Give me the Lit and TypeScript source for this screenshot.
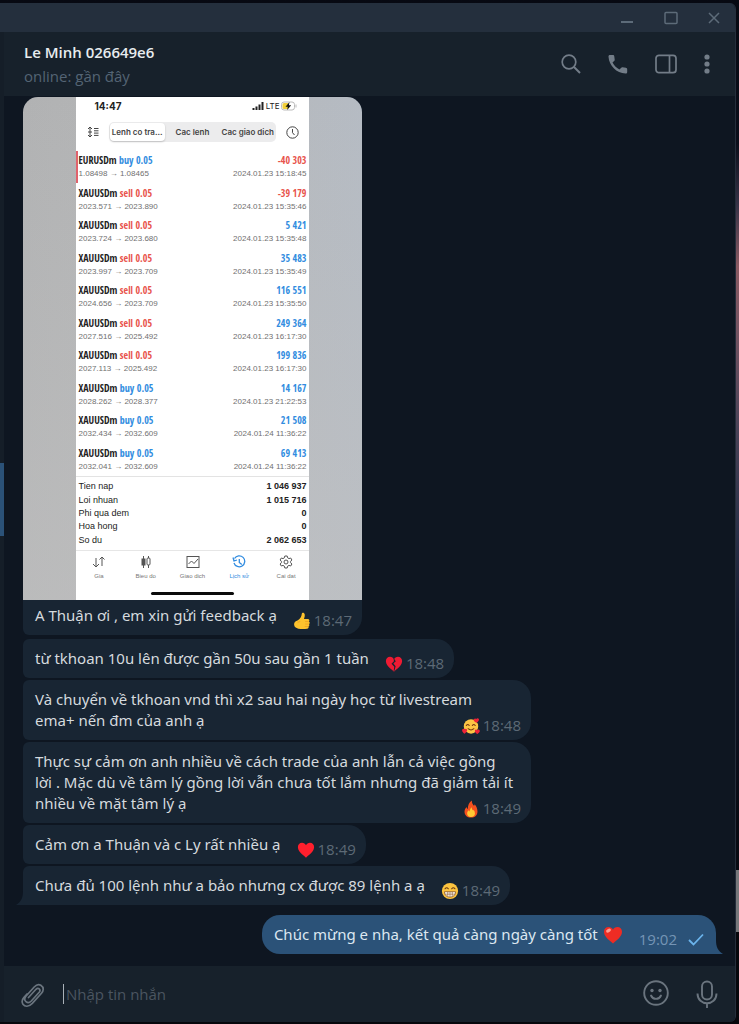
import { LitElement, html, svg, css, TemplateResult } from "lit";
import { customElement, property } from "lit/decorators.js";
import { classMap } from "lit/directives/class-map.js";

interface Trade {
  symbol: string;
  side: "buy" | "sell";
  from: string;
  to: string;
  profit: string;
  time: string;
}

interface Message {
  text: string;
  time: string;
  reaction: string;
  tail?: boolean;
}

const TRADES: Trade[] = [
  { symbol: "EURUSDm", side: "buy", from: "1.08498", to: "1.08465", profit: "-40 303", time: "2024.01.23 15:18:45" },
  { symbol: "XAUUSDm", side: "sell", from: "2023.571", to: "2023.890", profit: "-39 179", time: "2024.01.23 15:35:46" },
  { symbol: "XAUUSDm", side: "sell", from: "2023.724", to: "2023.680", profit: "5 421", time: "2024.01.23 15:35:48" },
  { symbol: "XAUUSDm", side: "sell", from: "2023.997", to: "2023.709", profit: "35 483", time: "2024.01.23 15:35:49" },
  { symbol: "XAUUSDm", side: "sell", from: "2024.656", to: "2023.709", profit: "116 551", time: "2024.01.23 15:35:50" },
  { symbol: "XAUUSDm", side: "sell", from: "2027.516", to: "2025.492", profit: "249 364", time: "2024.01.23 16:17:30" },
  { symbol: "XAUUSDm", side: "sell", from: "2027.113", to: "2025.492", profit: "199 836", time: "2024.01.23 16:17:30" },
  { symbol: "XAUUSDm", side: "buy", from: "2028.262", to: "2028.377", profit: "14 167", time: "2024.01.23 21:22:53" },
  { symbol: "XAUUSDm", side: "buy", from: "2032.434", to: "2032.609", profit: "21 508", time: "2024.01.24 11:36:22" },
  { symbol: "XAUUSDm", side: "buy", from: "2032.041", to: "2032.609", profit: "69 413", time: "2024.01.24 11:36:22" },
];

const TOTALS: [string, string][] = [
  ["Tien nap", "1 046 937"],
  ["Loi nhuan", "1 015 716"],
  ["Phi qua dem", "0"],
  ["Hoa hong", "0"],
  ["So du", "2 062 653"],
];

const MESSAGES: Message[] = [
  { text: "từ tkhoan 10u lên được gần 50u sau gần 1 tuần", time: "18:48", reaction: "broken" },
  { text: "Và chuyển về tkhoan vnd thì x2 sau hai ngày học từ livestream\nema+ nến đm của anh ạ", time: "18:48", reaction: "love" },
  { text: "Thực sự cảm ơn anh nhiều về cách trade của anh lẫn cả việc gồng\nlời . Mặc dù về tâm lý gồng lời vẫn chưa tốt lắm nhưng đã giảm tải ít\nnhiều về mặt tâm lý ạ", time: "18:49", reaction: "fire" },
  { text: "Cảm ơn a Thuận và c Ly rất nhiều ạ", time: "18:49", reaction: "heart" },
  { text: "Chưa đủ 100 lệnh như a bảo nhưng cx được 89 lệnh a ạ", time: "18:49", reaction: "grin", tail: true },
];

const HEART = "M10 18.5C4.5 14 1 11 1 6.8 1 4 3 2 5.6 2 7.500 2 9.200 3 10 4.700 10.800 3 12.500 2 14.400 2 17 2 19 4 19 6.800 19 11 15.500 14 10 18.500Z";

const EMOJI: Record<string, TemplateResult> = {
  thumb: svg`<path fill="#fdc22d" d="M5.500 9.200C8 7.500 9.600 5 9.700 2.200 9.900.3 12.600.2 13 2.600c.3 1.800-.2 3.600-.8 5.200h4.200c2 0 2.300 2 1.200 2.700 1.400.7 1.200 2.500.1 2.900.9.800.6 2.300-.5 2.700.5 1.200-.2 2.500-1.600 2.600-3.200.5-6.600.4-9.600-.2-2.800-.4-4.600-1.700-4.800-4.500-.1-2.400 1.700-4 4.300-4.800Z"/><path fill="none" stroke="#e8961c" stroke-width=".7" d="M13.500 10.600h4M13.500 13.400h4M13 16.100h3.900M8 10.500c-1 .5-2 .8-3 .8"/>`,
  broken: svg`<path fill="#ef1b33" d=${HEART}/><path fill="#182533" d="M9.500 3.400 12 7 9.300 9.500l2.500 3-1.700 6-.5-.5.700-5L7.200 9.800 9.900 7Z"/>`,
  heart: svg`<path fill="#ff1f2d" d=${HEART}/>`,
  shinyheart: svg`<path fill="#ee2c24" d=${HEART}/><ellipse cx="5.500" cy="5.600" rx="2.600" ry="1.700" fill="#ff9d91" transform="rotate(-30 5.500 5.600)"/>`,
  love: svg`<circle cx="10" cy="10.500" r="8" fill="#fdc544"/><path fill="none" stroke="#7a3b10" stroke-width="1.200" stroke-linecap="round" d="M4.800 9.500q1.600-2.400 3.200 0M11.500 9.500q1.600-2.400 3.200 0M6.800 13q3.200 2.800 6.400 0"/><path fill="#ef2338" d="M16 6.500c-3-1.700-3.500-3-2.700-4.300.8-1 2-.8 2.500.1.8-1 2.300-1.100 2.900 0 .6 1.400-.7 2.900-2.700 4.200ZM2.900 18.500C.3 16.800-.4 15 .5 13.700c.8-1 2-.6 2.400.2.700-1 2.200-1 2.700.2.500 1.400-.7 3-2.700 4.400ZM17 18.900c-2.600-1.600-3.200-3.200-2.400-4.400.8-1 2-.6 2.400.2.700-1 2.200-1 2.700.2.500 1.300-.7 2.700-2.700 4Z"/>`,
  fire: svg`<path fill="#f5501e" d="M10 19.500c-4.400 0-7.200-2.700-7.200-6.500 0-2.400 1.200-4 2.200-5.300.3 1.300.8 1.900 1.500 2.200C6.300 6 8 2.500 11 .5c-.3 3 1 4.200 2.300 6 .5-.5.7-1 .7-1.800 2 2 3.200 5 3.200 8 0 4-2.800 6.800-7.200 6.800Z"/><path fill="#ffc833" d="M10 19c-2.700 0-4.300-1.700-4.300-4 0-1.800 1-2.800 1.700-3.500.2.800.5 1.100 1 1.400C8.500 11 9.500 9 10.800 8c0 2 .7 2.700 1.600 3.800.3-.2.4-.5.5-.9 1 1.200 1.500 2.600 1.500 4.200 0 2.400-1.700 3.900-4.400 3.900Z"/>`,
  grin: svg`<circle cx="10" cy="10" r="9" fill="#fdc43f"/><path fill="none" stroke="#6b3a12" stroke-width="1.300" stroke-linecap="round" d="M4.500 7.500q1.800-2.200 3.600 0M11.900 7.500q1.800-2.200 3.600 0"/><path fill="#fff" stroke="#8a5420" stroke-width=".9" d="M3.800 10.800h12.400c0 4-2.600 6-6.200 6s-6.200-2-6.200-6Z"/><path fill="none" stroke="#8a5420" stroke-width=".7" d="M4.400 13.500h11.200M7.500 11v5M10 11v5.500M12.500 11v5"/>`,
};

@customElement("emoji-glyph")
class EmojiGlyph extends LitElement {
  @property() name = "heart";
  static styles = css`
    :host { display: inline-flex; width: 18px; height: 18px; }
    svg { width: 100%; height: 100%; }
  `;
  render() {
    return html`<svg viewBox="0 0 20 20" aria-hidden="true">${EMOJI[this.name]}</svg>`;
  }
}

@customElement("trade-history")
class TradeHistory extends LitElement {
  static styles = css`
    * { box-sizing: border-box; }
    :host {
      display: flex;
      justify-content: center;
      background: linear-gradient(180deg, rgba(190, 190, 190, 0) 0%, rgba(196, 196, 196, 0.5) 100%),
        linear-gradient(90deg, #b1b2b3 0%, #b6b7b8 50%, #b5bbc3 100%);
      color: #222;
      font-family: "Liberation Sans", Arial, sans-serif;
    }
    .screen { width: 69%; background: #fff; display: flex; flex-direction: column; }
    button { font: inherit; color: inherit; border: 0; padding: 0; background: none; }
    svg { display: block; fill: none; stroke: currentColor; }
    .status {
      display: flex; align-items: center; justify-content: space-between;
      height: 18px; padding: 0 12px 0 19px;
      font: 700 10px/18px Inter, sans-serif;
    }
    .signal { display: flex; align-items: center; gap: 2px; font-weight: 400; font-size: 8px; }
    .nav { display: flex; align-items: center; gap: 10px; height: 36px; padding: 0 10px 2px 11px; color: #444; }
    .segments {
      flex: 1; display: grid; grid-template-columns: 1fr 1fr 1fr;
      height: 20px; padding: 1px; border-radius: 5px; background: #ececed;
      font: 600 8px/18px Inter, sans-serif;
    }
    .segments button { white-space: nowrap; }
    .segments .on { background: #fff; border-radius: 4px; box-shadow: 0 1px 2px rgba(0, 0, 0, 0.2); }
    table { width: 100%; border-collapse: collapse; }
    td { padding: 0 3px; text-align: left; vertical-align: middle; }
    td:last-child { text-align: right; }
    .trades { height: 326px; border-bottom: 1px solid #e3e3e3; }
    .trades td { line-height: 13px; white-space: nowrap; }
    .trades tr:first-child td:first-child { box-shadow: inset 2px 0 #e0626c; }
    .deal { font: 700 10px/13px "Liberation Sans Narrow", "Open Sans Condensed", "Roboto Condensed", Roboto, sans-serif; color: #222; }
    .detail { font-size: 8px; color: #707070; }
    .blue { color: #318ce0; }
    .red { color: #e8534b; }
    .totals { height: 73px; border-top: 3px solid transparent; border-bottom: 3px solid transparent; font-size: 9px; line-height: 13px; }
    .totals td:last-child { font-weight: 700; }
    .tabs {
      display: grid; grid-template-columns: repeat(5, 1fr); align-items: start;
      height: 38px; padding-top: 4px; border-top: 1px solid #e6e6e6;
      font-size: 6px; line-height: 8px; color: #777;
    }
    .tabs button { display: flex; flex-direction: column; align-items: center; gap: 3px; }
    .tabs svg { width: 14px; height: 14px; color: #555; }
    .tabs .on, .tabs .on svg { color: #318ce0; }
    .home { width: 83px; height: 3px; margin: 4px auto 5px; border-radius: 2px; background: #0b0b0b; }
  `;

  private tab(label: string, icon: TemplateResult, on = false) {
    return html`<button class=${classMap({ on })}><svg viewBox="0 0 14 14">${icon}</svg>${label}</button>`;
  }

  render() {
    return html`
      <div class="screen">
        <div class="status">
          <span>14:47</span>
          <span class="signal">
            <svg width="12" height="8" viewBox="0 0 12 8"><path d="M1.500 8V6M4.500 8V4.500M7.500 8V2.500M10.500 8V0" stroke-width="2"/></svg>
            LTE
            <svg width="16" height="10" viewBox="0 0 16 10"><rect x=".5" y="1" width="13" height="8" rx="2.500" stroke="#bbb"/><path d="M3 2h4v6H3q-1.500 0-1.500-1.500v-3Q1.500 2 3 2Z" fill="#f2d03b" stroke="none"/><path d="M8.500 1 4.500 5.700h2.300L6.200 9l4-4.700H7.900Z" fill="#111" stroke="none"/><path d="M15 3.500v3" stroke="#bbb"/></svg>
          </span>
        </div>
        <div class="nav">
          <button aria-label="Sort"><svg width="12" height="12" viewBox="0 0 12 12"><path d="M3 1v10M1 3l2-2 2 2M1 9l2 2 2-2M1 6h4M7 2.500h4.500M7 4.800h4.500M7 7.100h4.500M7 9.400h4.500"/></svg></button>
          <div class="segments">
            <button class="on">Lenh co tra...</button><button>Cac lenh</button><button>Cac giao dich</button>
          </div>
          <button aria-label="Period"><svg width="13" height="13" viewBox="0 0 13 13"><circle cx="6.500" cy="6.500" r="5.700"/><path d="M6.500 3v3.700L8.500 9"/></svg></button>
        </div>
        <table class="trades">
          <tbody>
            ${TRADES.map(
              (t) => html`<tr>
                <td>
                  <div class="deal">${t.symbol} <span class=${t.side === "buy" ? "blue" : "red"}>${t.side} 0.05</span></div>
                  <div class="detail">${t.from} → ${t.to}</div>
                </td>
                <td>
                  <div class="deal"><span class=${t.profit.startsWith("-") ? "red" : "blue"}>${t.profit}</span></div>
                  <div class="detail">${t.time}</div>
                </td>
              </tr>`
            )}
          </tbody>
        </table>
        <table class="totals">
          <tbody>
            ${TOTALS.map(([label, value]) => html`<tr><td>${label}</td><td>${value}</td></tr>`)}
          </tbody>
        </table>
        <div class="tabs">
          ${this.tab("Gia", svg`<path d="M4 3v9M1 9l3 3 3-3M10 11V2M7.500 4.500 10 2l2.500 2.500"/>`)}
          ${this.tab("Bieu do", svg`<path d="M4.500 1v12M9.500 1v12"/><rect x="3" y="4" width="3" height="6" fill="currentColor"/><rect x="8" y="3" width="3" height="7" rx="1" fill="#fff"/>`)}
          ${this.tab("Giao dich", svg`<rect x="1" y="1.500" width="12" height="11"/><path d="m2.500 9 3-3 2.500 2.500 4-4.500"/>`)}
          ${this.tab("Lịch sử", svg`<path d="M2 8a5.500 5.500 0 1 0 .5-4.500M1 2.500l1 3.500 3-1M7.300 4v3.500l2.500 2" stroke-width="1.300"/>`, true)}
          ${this.tab("Cai dat", svg`<circle cx="7" cy="7" r="2"/><path d="M5.800 1h2.400l.4 1.800 1.400.8 1.700-.6 1.200 2L11.600 6.300v1.400l1.300 1.300-1.200 2-1.700-.6-1.400.8-.4 1.800H5.800l-.4-1.800-1.400-.8-1.700.6-1.200-2 1.300-1.300V6.300L1.100 5l1.200-2 1.700.6 1.400-.8Z"/>`)}
        </div>
        <div class="home"></div>
      </div>
    `;
  }
}

@customElement("app-root")
class AppRoot extends LitElement {
  static styles = css`
    * { box-sizing: border-box; }
    :host {
      display: block;
      box-sizing: border-box;
      height: 100vh;
      min-height: 600px;
      padding: 3px 3px 2px 0;
      background: linear-gradient(180deg, #070912 0%, #0b0e1a 14%, #373347 20%, #8a5a62 26%, #765563 32%, #4a4358 42%, #2a3148 52%, #12182a 62%, #080a12 80%, #080a12 85%, #77787b 85%, #77787b 91%, #06070c 91%, #06070c 100%);
      font: 15px/21px "Open Sans", "Noto Sans", sans-serif;
      color: #d5dade;
    }
    button { border: 0; padding: 0; background: none; color: inherit; display: flex; }
    svg { display: block; fill: none; stroke: currentColor; }
    .window {
      height: 100%; display: grid; grid-template-columns: 4px 1fr; grid-template-rows: 29px 1fr;
      border-radius: 0 6px 6px 0; overflow: hidden; border-right: 1px solid #252e3b;
      background: #0e1621;
    }
    .titlebar {
      grid-column: 1 / -1; display: flex; align-items: center; justify-content: flex-end; gap: 30px;
      padding: 0 15px; background: #242f3d; color: #5d6b79;
    }
    .sidebar { background: #151e28; display: flex; flex-direction: column; }
    .sidebar::before { content: ""; flex: 431 0 0; }
    .sidebar::after { content: ""; flex: 486 0 0; }
    .active { height: 73px; background: #2b5278; }
    .pane { display: flex; flex-direction: column; min-width: 0; min-height: 0; }
    .header {
      flex: none; height: 64px; padding: 0 25px 0 20px; background: #17212b;
      display: flex; align-items: center; justify-content: space-between;
    }
    .title { margin: 0; font-size: 15px; line-height: 24px; font-weight: 600; color: #e8ecef; }
    .presence { margin: 0; font-size: 15px; line-height: 24px; color: #546474; }
    .actions { display: flex; align-items: center; gap: 27px; color: #737d88; }
    .chat {
      flex: 1; min-height: 0; overflow: hidden; padding: 0 19px 12px;
      display: flex; flex-direction: column; justify-content: flex-end; align-items: flex-start; gap: 2px;
    }
    .bubble {
      flex: none; position: relative; max-width: 508px; padding: 9px 10px 9px 12px;
      background: #182533; border-radius: 6px 18px 18px 6px;
      font-family: "Noto Sans", sans-serif;
    }
    .bubble.wide { width: 100%; }
    .bubble p { margin: 0; display: flow-root; white-space: pre-line; }
    .meta {
      float: right; display: flex; align-items: center; gap: 3px; height: 21px;
      margin: 5px 0 -5px 16px; color: #5d6a76; white-space: normal;
      font-family: "Open Sans", sans-serif;
    }
    .bubble.tail { border-bottom-left-radius: 0; }
    .tailshape { position: absolute; bottom: 0; width: 7px; height: 14px; stroke: none; }
    .tail .tailshape { right: 100%; fill: #182533; }
    .photo { width: 339px; padding: 0; border-radius: 15px 15px 18px 6px; overflow: hidden; margin: 0 0 2px; }
    .photo figcaption { padding: 5px 10px 9px 12px; }
    .photo .meta { margin-left: 8px; }
    .out { align-self: flex-end; margin-top: 8px; padding-right: 12px; background: #2b5278; color: #dce7f1; border-radius: 18px 18px 0 18px; }
    .out .tailshape { left: 100%; fill: #2b5278; }
    .out p { display: flex; align-items: center; gap: 5px; white-space: normal; }
    .out .meta { gap: 11px; color: #7595b5; margin-left: 11px; }
    .out .check { color: #6bb4ec; }
    .out emoji-glyph { width: 20px; height: 20px; }
    .composer {
      flex: none; height: 56px; padding: 0 17px; background: #17212b;
      display: flex; align-items: center; color: #6a747e;
    }
    .composer input {
      flex: 1; min-width: 0; height: 20px; margin: 0 16px 0 18px; padding: 0 2px;
      border: 0; border-left: 1px solid #a9b1b8; outline: 0;
      background: none; color: #d5dade; font: inherit;
    }
    .composer input::placeholder { color: #4b5560; opacity: 1; }
    .tools { display: flex; gap: 27px; }
  `;

  private meta(reaction: string, time: string) {
    return html`<span class="meta"><emoji-glyph name=${reaction}></emoji-glyph><time>${time}</time></span>`;
  }

  render() {
    return html`
      <div class="window">
        <div class="titlebar">
          <button aria-label="Minimize"><svg width="14" height="14" viewBox="0 0 14 14"><path d="M1 11h12" stroke-width="2"/></svg></button>
          <button aria-label="Maximize"><svg width="14" height="14" viewBox="0 0 14 14"><rect x="1" y="1.500" width="12" height="11" rx="1" stroke-width="1.500"/></svg></button>
          <button aria-label="Close"><svg width="12" height="12" viewBox="0 0 12 12"><path d="m1 1 10 10M11 1 1 11" stroke-width="1.500"/></svg></button>
        </div>
        <div class="sidebar"><div class="active"></div></div>
        <main class="pane">
          <header class="header">
            <div>
              <h1 class="title">Le Minh 026649e6</h1>
              <p class="presence">online: gần đây</p>
            </div>
            <div class="actions">
              <button aria-label="Search"><svg width="20" height="20" viewBox="0 0 20 20"><circle cx="8" cy="8" r="6.800" stroke-width="1.700"/><path d="m13 13 6 6" stroke-width="2"/></svg></button>
              <button aria-label="Call"><svg width="20" height="20" viewBox="1 1 20 20"><path fill="currentColor" stroke="none" d="M1.500 3.800C1.400 2.600 2 2 3 2h2.700c1 0 1.500.5 1.600 1.400l.4 3c.1.700-.1 1.200-.6 1.700L5.500 9.600c1.500 3 3.800 5.300 6.900 6.900l1.600-1.600c.4-.5 1-.7 1.600-.6l3.200.5c.9.100 1.400.7 1.400 1.600V19c0 1-.7 1.700-1.700 1.600C9.500 20.300 2 12.500 1.500 3.800Z"/></svg></button>
              <button aria-label="Info panel"><svg width="22" height="20" viewBox="0 0 22 20"><rect x="1" y="1.300" width="20" height="17.400" rx="3" stroke-width="1.700"/><path d="M14.500 1.500v17" stroke-width="1.700"/></svg></button>
              <button aria-label="More"><svg width="6" height="20" viewBox="5 0 6 20"><g fill="currentColor" stroke="none"><circle cx="8" cy="3" r="2.600"/><circle cx="8" cy="10" r="2.600"/><circle cx="8" cy="17" r="2.600"/></g></svg></button>
            </div>
          </header>
          <section class="chat">
            <figure class="bubble photo">
              <trade-history></trade-history>
              <figcaption><p>A Thuận ơi , em xin gửi feedback ạ ${this.meta("thumb", "18:47")}</p></figcaption>
            </figure>
            ${MESSAGES.map(
              (m) => html`<article class=${classMap({ bubble: true, tail: !!m.tail, wide: m.text.includes("\n") })}>
                <p>${m.text} ${this.meta(m.reaction, m.time)}</p>
                ${m.tail ? html`<svg class="tailshape" viewBox="0 0 7 14"><path d="M7 0v14H0C5 11 7 7 7 0Z"/></svg>` : ""}
              </article>`
            )}
            <article class="bubble out">
              <p>Chúc mừng e nha, kết quả càng ngày càng tốt <emoji-glyph name="shinyheart"></emoji-glyph>
                <span class="meta"><time>19:02</time>
                  <svg class="check" width="16" height="13" viewBox="0 0 16 13"><path d="m1 7 4.500 4.500L15 1.500" stroke-width="1.800"/></svg>
                </span></p>
              <svg class="tailshape" viewBox="0 0 7 14"><path d="M0 0v14h7C2 11 0 7 0 0Z"/></svg>
            </article>
          </section>
          <footer class="composer">
            <button aria-label="Attach"><svg width="24" height="28" viewBox="0 0 24 28"><path d="M7.500 17.500 15 9.300c2.200-2.300 5.300.3 3.200 2.900L10.300 21c-3.700 3.800-8.700-.5-5.400-4.700L13.200 7c1.800-1.900 4-3.300 6.600-1.700 3.500 2.200 2.700 5.600.7 7.900L11.300 23.400c-3.700 3.800-7.500 3.500-9.300.8-1.500-2.400-.7-4.900.8-6.600L6 14" stroke-width="1.700" stroke-linecap="round"/></svg></button>
            <input type="text" placeholder="Nhập tin nhắn" aria-label="Nhập tin nhắn" />
            <div class="tools">
              <button aria-label="Emoji"><svg width="26" height="26" viewBox="0 0 26 26"><circle cx="13" cy="13" r="11.800" stroke-width="1.900"/><path d="M8 15.500c2 4.500 8 4.500 10 0" stroke-width="1.900" stroke-linecap="round"/><g fill="currentColor" stroke="none"><circle cx="9" cy="10.500" r="1.700"/><circle cx="17" cy="10.500" r="1.700"/></g></svg></button>
              <button aria-label="Voice message"><svg width="22" height="28" viewBox="1 0 22 28"><rect x="7" y="1.500" width="10" height="18" rx="5" stroke-width="1.900"/><path d="M2.500 13.500c0 13 19 13 19 0M12 23.500V28" stroke-width="1.900"/></svg></button>
            </div>
          </footer>
        </main>
      </div>
    `;
  }
}
